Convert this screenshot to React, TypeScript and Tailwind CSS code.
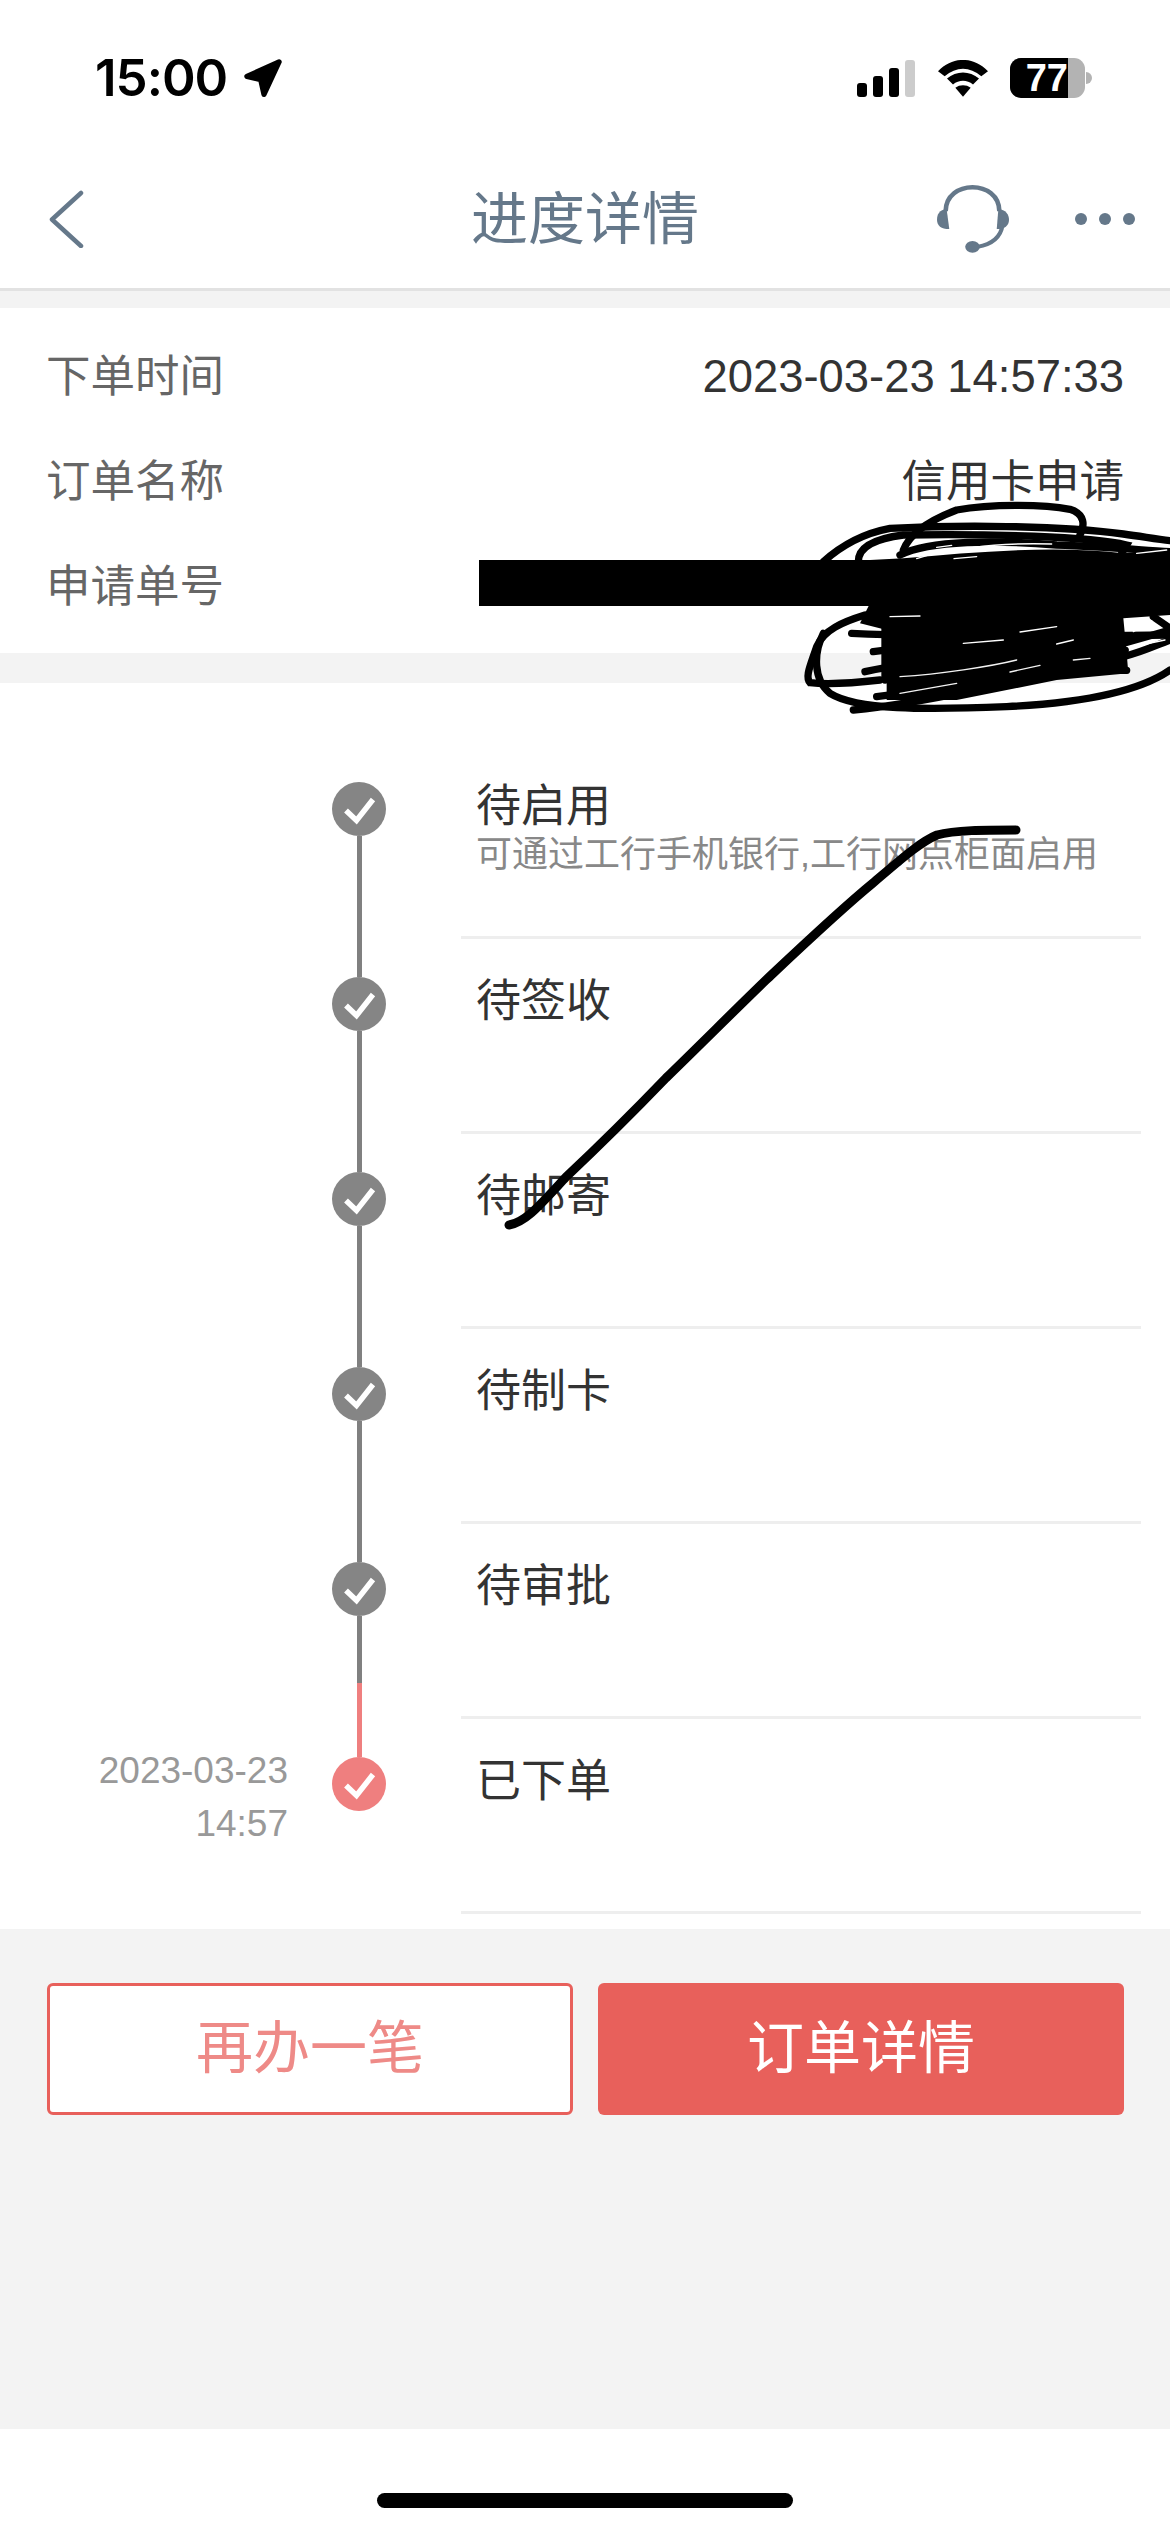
const steps = [
  { title: '待启用', note: '可通过工行手机银行,工行网点柜面启用' },
  { title: '待签收' },
  { title: '待邮寄' },
  { title: '待制卡' },
  { title: '待审批' },
  { title: '已下单', date: '2023-03-23', time: '14:57', done: true },
]

const scribbleLines = [
  'M340 180C360 130 420 90 500 60C600 42 760 42 840 58C885 72 885 105 870 135',
  'M100 215C150 170 220 130 300 115C500 105 800 105 1000 132C1060 140 1100 148 1140 152',
  'M205 215C205 170 260 145 340 135C600 130 900 140 1010 165L995 190',
  'M330 195C420 150 620 150 800 165C950 170 1050 180 1140 185',
  'M225 375C160 395 100 420 80 470C60 530 45 560 60 578C120 585 200 578 270 570',
  'M100 430C70 490 70 570 120 610C200 660 400 660 650 650C850 640 1040 610 1140 540',
  'M190 660C400 640 700 570 1000 500C1060 485 1100 465 1140 450',
  'M260 620C500 590 800 520 1140 420',
  'M225 545C400 505 700 490 1005 482',
  'M250 485C500 450 800 440 1005 480',
  'M330 550C600 540 800 540 1010 541',
  'M185 430C400 440 800 440 1140 435',
  'M285 400L285 570',
  'M1090 380L1140 415',
]

// gaps left open between the marker strokes
const whiteGaps = [
  'M440 172L485 166',
  'M550 172C620 162 700 160 785 162',
  'M380 206L412 196',
  'M492 206L560 200',
  'M1040 190L1130 180',
  'M300 380L390 378',
  'M690 426L800 410',
  'M520 460L640 450',
  'M800 462L850 450',
  'M1030 425L1085 392',
  'M1030 470L1125 450',
]
const bandGaps = [
  'M330 560C450 552 600 530 680 510',
  'M330 610L500 580',
  'M660 546L750 526',
  'M850 510L900 505',
]

function StatusBar() {
  return (
    <div className="flex h-[150px] items-start justify-between pt-[45px]">
      <div className="ml-[95px] flex items-center gap-[16px]">
        <span className="font-['Inter',sans-serif] text-[51px] leading-[66px] font-semibold tracking-[-1px] text-black">15:00</span>
        <svg width="40" height="40" viewBox="488 55 122 120">
          <path d="M598 66L500 110L542 120L552 165Z" fill="#000" stroke="#000" strokeWidth="16" strokeLinejoin="round" />
        </svg>
      </div>
      <div className="mt-[13px] mr-[78px] flex items-center">
        <svg width="58" height="37" viewBox="0 0 58 37">
          <rect x="0" y="23" width="10" height="14" rx="3" fill="#000" />
          <rect x="16" y="16" width="10" height="21" rx="3" fill="#000" />
          <rect x="32" y="8" width="10" height="29" rx="3" fill="#000" />
          <rect x="48" y="0" width="10" height="37" rx="3" fill="#cccccc" />
        </svg>
        <svg className="ml-[23px]" width="50" height="37" viewBox="470 57 150 110">
          <path d="M470 90C515 45 575 45 620 90L600 105C565 75 525 75 490 105Z" fill="#000" />
          <path d="M497 112C525 88 565 88 593 112L575 130C557 115 533 115 515 130Z" fill="#000" />
          <path d="M522 140C535 130 555 130 568 140L545 167Z" fill="#000" />
        </svg>
        <div className="ml-[22px] flex h-[40px] w-[75px] overflow-hidden rounded-[11px] bg-[#b3b3b3]">
          <div className="flex w-[58px] items-center justify-end bg-black text-[38px] leading-none font-bold text-white">77</div>
        </div>
        <div className="ml-px h-[12px] w-[6px] rounded-r-full bg-[#b3b3b3]" />
      </div>
    </div>
  )
}

function NavBar() {
  return (
    <div className="grid h-[141px] grid-cols-[1fr_auto_1fr] items-center border-b-[3px] border-[#e2e2e2]">
      <div className="pl-[48px]">
        <svg width="36" height="58" viewBox="0 0 36 58" fill="none">
          <path d="M33 3L4 29.5L33 56" stroke="#65788a" strokeWidth="4.5" strokeLinecap="round" strokeLinejoin="round" />
        </svg>
      </div>
      <div className="text-[57px] leading-none text-[#65788a]">进度详情</div>
      <div className="flex items-center justify-end gap-[66px] pr-[35px]">
        <svg width="72" height="70" viewBox="468 423 217 210" fill="none">
          <path d="M494 505C494 408 656 408 656 505" stroke="#65788a" strokeWidth="14" />
          <path d="M497 498C475 500 468 515 468 530C468 548 480 558 505 558Z" fill="#65788a" />
          <path d="M653 498C675 500 685 515 685 530C685 548 672 558 648 558Z" fill="#65788a" />
          <path d="M666 545C660 585 630 605 590 612" stroke="#65788a" strokeWidth="12" />
          <ellipse cx="575" cy="612" rx="22" ry="18" fill="#65788a" />
        </svg>
        <div className="flex gap-[12px]">
          <span className="h-[12px] w-[12px] rounded-full bg-[#65788a]" />
          <span className="h-[12px] w-[12px] rounded-full bg-[#65788a]" />
          <span className="h-[12px] w-[12px] rounded-full bg-[#65788a]" />
        </div>
      </div>
    </div>
  )
}

function OrderInfo() {
  return (
    <div className="flex h-[345px] flex-col bg-white pt-[17px] text-[44.5px] text-[#666666]">
      <div className="flex h-[105px] items-center justify-between pr-[46px] pl-[46px]">
        <span>下单时间</span>
        <span className="text-[45.4px] text-[#333333]">2023-03-23 14:57:33</span>
      </div>
      <div className="flex h-[105px] items-center justify-between pr-[46px] pl-[46px]">
        <span>订单名称</span>
        <span className="text-[#333333]">信用卡申请</span>
      </div>
      <div className="flex h-[105px] items-center pl-[46px]">
        <span>申请单号</span>
        <div className="mb-[10px] ml-[255px] h-[46px] flex-1 bg-black" />
      </div>
    </div>
  )
}

function Check() {
  return (
    <svg width="54" height="54" viewBox="0 0 54 54" fill="none">
      <path d="M14 28.5L24.5 38.5L41 17.5" stroke="#fff" strokeWidth="5.5" />
    </svg>
  )
}

function Timeline() {
  return (
    <div className="bg-white pt-[61px] pb-[15px]">
      {steps.map((s, i) => (
        <div key={s.title} className="flex h-[195px]">
          <div className="w-[288px] pt-[25px] text-right text-[37px] leading-[53px] text-[#999999]">
            {s.date && <div>{s.date}</div>}
            {s.time && <div>{s.time}</div>}
          </div>
          <div className="ml-[44px] flex w-[54px] flex-col items-center">
            <div className={`h-[38px] w-[5px] ${i === 0 ? 'bg-transparent' : s.done ? 'bg-[#ef7f7f]' : 'bg-[#808080]'}`} />
            <div className={`h-[54px] w-[54px] rounded-full ${s.done ? 'bg-[#ef7f7f]' : 'bg-[#858585]'}`}>
              <Check />
            </div>
            {!s.done && <div className="w-[5px] flex-1 bg-[#808080]" />}
            {i === 4 && <div className="h-[36px] w-[5px] bg-[#ef7f7f]" />}
          </div>
          <div className="mr-[29px] ml-[75px] flex-1 border-b-[3px] border-[#eeeeee] pt-[39px] pl-[15px]">
            <div className="text-[45px] leading-[48px] text-[#333333]">{s.title}</div>
            {s.note && <div className="text-[36px] leading-[48px] whitespace-nowrap text-[#888888]">{s.note}</div>}
          </div>
        </div>
      ))}
    </div>
  )
}

function Actions() {
  return (
    <div className="grid h-[500px] grid-cols-2 items-start gap-[25px] bg-[#f3f3f3] pt-[54px] pr-[46px] pl-[47px]">
      <button className="flex h-[132px] items-center justify-center rounded-[6px] border-[3px] border-[#e8605b] bg-white text-[57px] text-[#ee8a87]">
        再办一笔
      </button>
      <button className="flex h-[132px] items-center justify-center rounded-[6px] bg-[#e8605b] text-[57px] text-white">
        订单详情
      </button>
    </div>
  )
}

export default function App() {
  return (
    <div className="relative h-[2532px] w-[1170px] overflow-hidden bg-white font-['Liberation_Sans','Noto_Sans_CJK_SC',sans-serif]">
      <StatusBar />
      <NavBar />
      <div className="h-[17px] bg-[#f3f3f3]" />
      <OrderInfo />
      <div className="h-[30px] bg-[#f3f3f3]" />
      <Timeline />
      <Actions />
      <div className="flex justify-center pt-[64px]">
        <div className="h-[15px] w-[416px] rounded-full bg-black" />
      </div>

      {/* marker scribbles drawn over the screenshot */}
      <svg className="absolute top-[490px] left-[790px]" width="380" height="230" viewBox="0 0 1140 690" fill="none">
        <path d="M340 205C560 185 800 165 1000 190L1140 180L1140 225L1110 232L1110 282L1140 285L1140 375L1000 385L1010 490L1015 550L800 570L500 630L290 630L290 420L210 400L240 340L240 210Z" fill="#000" />
        {scribbleLines.map(d => (
          <path key={d} d={d} stroke="#000" strokeWidth="22" strokeLinecap="round" />
        ))}
        {whiteGaps.map(d => (
          <path key={d} d={d} stroke="#fff" strokeWidth="4" strokeLinecap="round" />
        ))}
        {bandGaps.map(d => (
          <path key={d} d={d} stroke="#f3f3f3" strokeWidth="4" strokeLinecap="round" />
        ))}
      </svg>
      <svg className="absolute top-[820px] left-[500px]" width="530" height="410" viewBox="500 820 530 410" fill="none">
        <path
          d="M509 1225C526 1222 540 1205 566 1177C600 1145 640 1105 666 1078C700 1045 740 1005 766 980C800 948 840 910 873 883C900 860 920 842 937 835C955 830 985 830 1016 830"
          stroke="#000"
          strokeWidth="9"
          strokeLinecap="round"
          strokeLinejoin="round"
        />
      </svg>
    </div>
  )
}
